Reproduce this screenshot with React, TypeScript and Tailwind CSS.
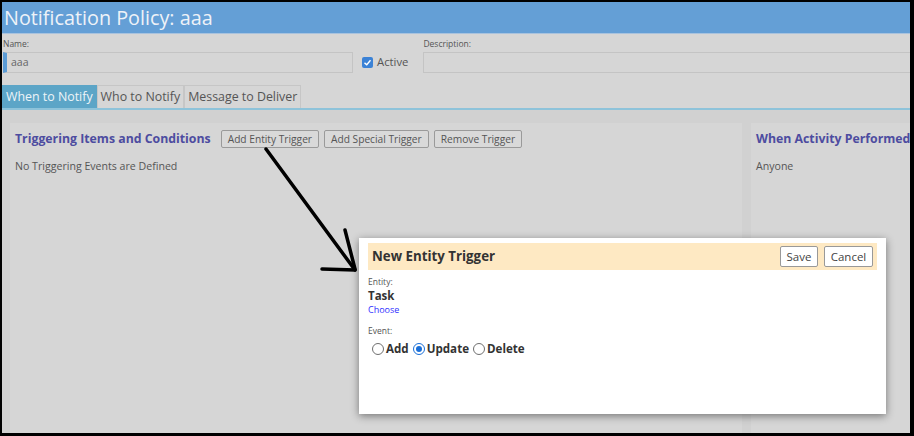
import React, { useState } from 'react';

const tabs = ['When to Notify', 'Who to Notify', 'Message to Deliver'];
const events = ['Add', 'Update', 'Delete'];

const Radio: React.FC<{ on: boolean }> = ({ on }) => (
  <span
    className={`inline-flex items-center justify-center w-[12px] h-[12px] rounded-full border bg-white ${
      on ? 'border-[#1a6fd8]' : 'border-[#6f6f6f]'
    }`}
  >
    {on && <span className="w-[6px] h-[6px] rounded-full bg-[#1a6fd8]" />}
  </span>
);

export default function App() {
  const [tab, setTab] = useState(0);
  const [event, setEvent] = useState('Update');

  return (
    <div
      className="relative w-[914px] h-[436px] overflow-hidden border-t-2 border-l-2 border-r-4 border-b-[3px] border-black bg-[#d1d1d1] text-[#555]"
      style={{ fontFamily: '"Open Sans", "Noto Sans", sans-serif' }}
    >
      {/* page title */}
      <div className="h-[32px] bg-[#649fd6] border-b border-[#a9c3de] pl-[2px]">
        <h1 className="text-[19.8px] leading-[31px] text-[#eef2f8]">Notification Policy: aaa</h1>
      </div>

      {/* name / active / description */}
      <div className="flex items-start pl-px pt-[4px] bg-[#d6d6d6]">
        <div className="w-[350px] shrink-0">
          <div className="text-[8.5px] leading-[12px]">Name:</div>
          <div className="mt-[2px] h-[21px] flex items-center border border-[#c4c4c4] border-l-[4px] border-l-[#5b9bd5] pl-[4px] text-[10.5px] text-[#666]">
            aaa
          </div>
        </div>
        <label className="ml-[9px] mt-[16px] flex items-center gap-[4px] text-[11.3px] text-[#555]">
          <span className="w-[11px] h-[11px] rounded-[2px] bg-[#3b82d6] flex items-center justify-center">
            <svg viewBox="0 0 12 12" className="w-[9px] h-[9px]">
              <path d="M2 6.5 L5 9 L10 3" stroke="#fff" strokeWidth="1.8" fill="none" />
            </svg>
          </span>
          Active
        </label>
        <div className="ml-[15px] flex-1 -mr-[10px]">
          <div className="text-[8.5px] leading-[12px]">Description:</div>
          <div className="mt-[2px] h-[21px] border border-[#c4c4c4]" />
        </div>
      </div>

      {/* tabs */}
      <div className="flex pt-[12px] bg-[#d6d6d6] border-b-2 border-[#8ec3da]">
        {tabs.map((t, i) => (
          <button
            key={t}
            onClick={() => setTab(i)}
            className={`h-[23px] px-[3px] text-[12.4px] leading-[22px] border border-b-0 ${
              tab === i ? 'bg-[#5ca5c7] border-[#5ca5c7] text-[#eef4f8]' : 'border-[#c6c6c6] text-[#555]'
            }`}
          >
            {t}
          </button>
        ))}
      </div>

      {/* panels */}
      <div className="flex gap-[9px] pl-[8px] pt-[13px] h-[330px]">
        <div className="w-[732px] shrink-0 bg-[#d6d6d6] px-[5px] pt-[7px]">
          <div className="flex items-center h-[18px]">
            <span className="text-[12.3px] font-bold text-[#4d4ca0] mr-[10px]">Triggering Items and Conditions</span>
            {['Add Entity Trigger', 'Add Special Trigger', 'Remove Trigger'].map(b => (
              <button
                key={b}
                className="h-[18px] px-[6px] mr-[5px] text-[10.2px] leading-[16px] border border-[#9a9a9a] rounded-[2px] bg-[#d9d9d9] text-[#555]"
              >
                {b}
              </button>
            ))}
          </div>
          <p className="mt-[11px] text-[10.6px]">No Triggering Events are Defined</p>
        </div>
        <div className="flex-1 min-w-0 bg-[#d6d6d6] px-[5px] pt-[7px]">
          <div className="h-[18px] flex items-center text-[12.3px] font-bold text-[#4d4ca0] whitespace-nowrap">
            When Activity Performed
          </div>
          <p className="mt-[11px] text-[10.6px]">Anyone</p>
        </div>
      </div>

      {/* hand-drawn pointer */}
      <svg className="absolute left-0 top-0 pointer-events-none" width="914" height="436">
        <g stroke="#000" strokeWidth="3.5" strokeLinecap="round" fill="none">
          <line x1="264" y1="147" x2="353" y2="268" />
          <line x1="343" y1="228" x2="353" y2="267" />
          <line x1="320" y1="267" x2="353" y2="268" />
        </g>
      </svg>

      {/* new entity trigger dialog */}
      <div className="absolute left-[357px] top-[236px] w-[527px] h-[176px] bg-white shadow-[0_2px_8px_rgba(0,0,0,0.45)] px-[9px] pt-[5px] text-[#444]">
        <div className="h-[27px] bg-[#fee9c3] flex items-center pl-[4px] pr-[4px]">
          <span className="text-[13.3px] font-bold text-[#333]">New Entity Trigger</span>
          <div className="ml-auto flex gap-[6px]">
            <button className="h-[21px] w-[38px] bg-white border border-[#999] rounded-[2px] text-[11.5px] text-[#444]">Save</button>
            <button className="h-[21px] w-[49px] bg-white border border-[#999] rounded-[2px] text-[11.5px] text-[#444]">Cancel</button>
          </div>
        </div>
        <div className="pt-[6px]">
          <div className="text-[8.5px] leading-[12px] text-[#555]">Entity:</div>
          <div className="text-[11.5px] leading-[16px] font-bold text-[#333]">Task</div>
          <a className="block text-[9px] leading-[12px] text-[#3030ff]">Choose</a>
          <div className="mt-[9px] text-[8.5px] leading-[12px] text-[#555]">Event:</div>
          <div className="flex items-center gap-[3px] mt-[3px] pl-[4px] text-[11.6px] font-bold text-[#333]">
            {events.map(e => (
              <button key={e} onClick={() => setEvent(e)} className="flex items-center gap-[2px] mr-[1px]">
                <Radio on={event === e} />
                {e}
              </button>
            ))}
          </div>
        </div>
      </div>
    </div>
  );
}
